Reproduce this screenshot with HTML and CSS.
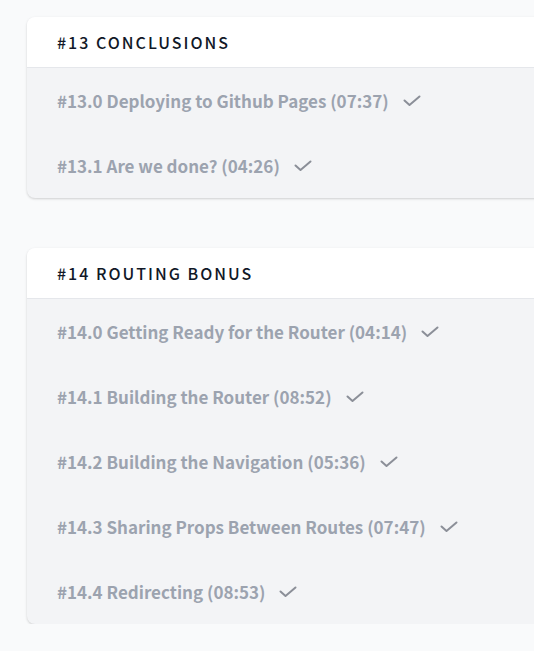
FILE: index.html
```html
<!DOCTYPE html>
<html>
<head>
<meta charset="utf-8">
<link rel="stylesheet" href="styles.css">
</head>
<body>
<main class="page">
  <section class="card">
    <h2 class="card-title">#13 Conclusions</h2>
    <ul class="lessons">
      <li class="lesson"><span>#13.0 Deploying to Github Pages (07:37)</span><svg class="check" viewBox="0 0 18 12"><polyline points="1.5,5.5 6.5,10 16.5,1.5"/></svg></li>
      <li class="lesson"><span>#13.1 Are we done? (04:26)</span><svg class="check" viewBox="0 0 18 12"><polyline points="1.5,5.5 6.5,10 16.5,1.5"/></svg></li>
    </ul>
  </section>
  <section class="card">
    <h2 class="card-title">#14 Routing Bonus</h2>
    <ul class="lessons">
      <li class="lesson"><span>#14.0 Getting Ready for the Router (04:14)</span><svg class="check" viewBox="0 0 18 12"><polyline points="1.5,5.5 6.5,10 16.5,1.5"/></svg></li>
      <li class="lesson"><span>#14.1 Building the Router (08:52)</span><svg class="check" viewBox="0 0 18 12"><polyline points="1.5,5.5 6.5,10 16.5,1.5"/></svg></li>
      <li class="lesson"><span>#14.2 Building the Navigation (05:36)</span><svg class="check" viewBox="0 0 18 12"><polyline points="1.5,5.5 6.5,10 16.5,1.5"/></svg></li>
      <li class="lesson"><span>#14.3 Sharing Props Between Routes (07:47)</span><svg class="check" viewBox="0 0 18 12"><polyline points="1.5,5.5 6.5,10 16.5,1.5"/></svg></li>
      <li class="lesson"><span>#14.4 Redirecting (08:53)</span><svg class="check" viewBox="0 0 18 12"><polyline points="1.5,5.5 6.5,10 16.5,1.5"/></svg></li>
    </ul>
  </section>
</main>
</body>
</html>
```
FILE: styles.css
```css
html, body {
  margin: 0;
  padding: 0;
  background: #f9fafb;
  overflow: hidden;
}
body {
  font-family: "Noto Sans CJK KR", "Noto Sans", sans-serif;
}
.page {
  display: flex;
  flex-direction: column;
  gap: 50px;
  padding: 17px 0 0 27px;
  width: 560px;
}
.card {
  border-radius: 8px;
  overflow: hidden;
  background: #f3f4f6;
  box-shadow: 0 1px 3px rgba(0,0,0,0.12), 0 1px 2px rgba(0,0,0,0.06);
}
.card-title {
  margin: 0;
  height: 51px;
  box-sizing: border-box;
  display: flex;
  align-items: center;
  padding: 0 30px;
  background: #fff;
  border-bottom: 1px solid #e5e7eb;
  font-size: 16px;
  font-weight: 500;
  letter-spacing: 2px;
  text-transform: uppercase;
  color: #111827;
}
.lessons {
  list-style: none;
  margin: 0;
  padding: 0;
}
.lesson {
  height: 65px;
  display: flex;
  align-items: center;
  gap: 14px;
  padding: 0 30px;
  font-size: 17px;
  font-weight: 600;
  color: #9ca3af;
}
.check {
  width: 18px;
  height: 12px;
  fill: none;
  stroke: #8b8f98;
  stroke-width: 2;
  stroke-linecap: round;
  stroke-linejoin: round;
}
```
